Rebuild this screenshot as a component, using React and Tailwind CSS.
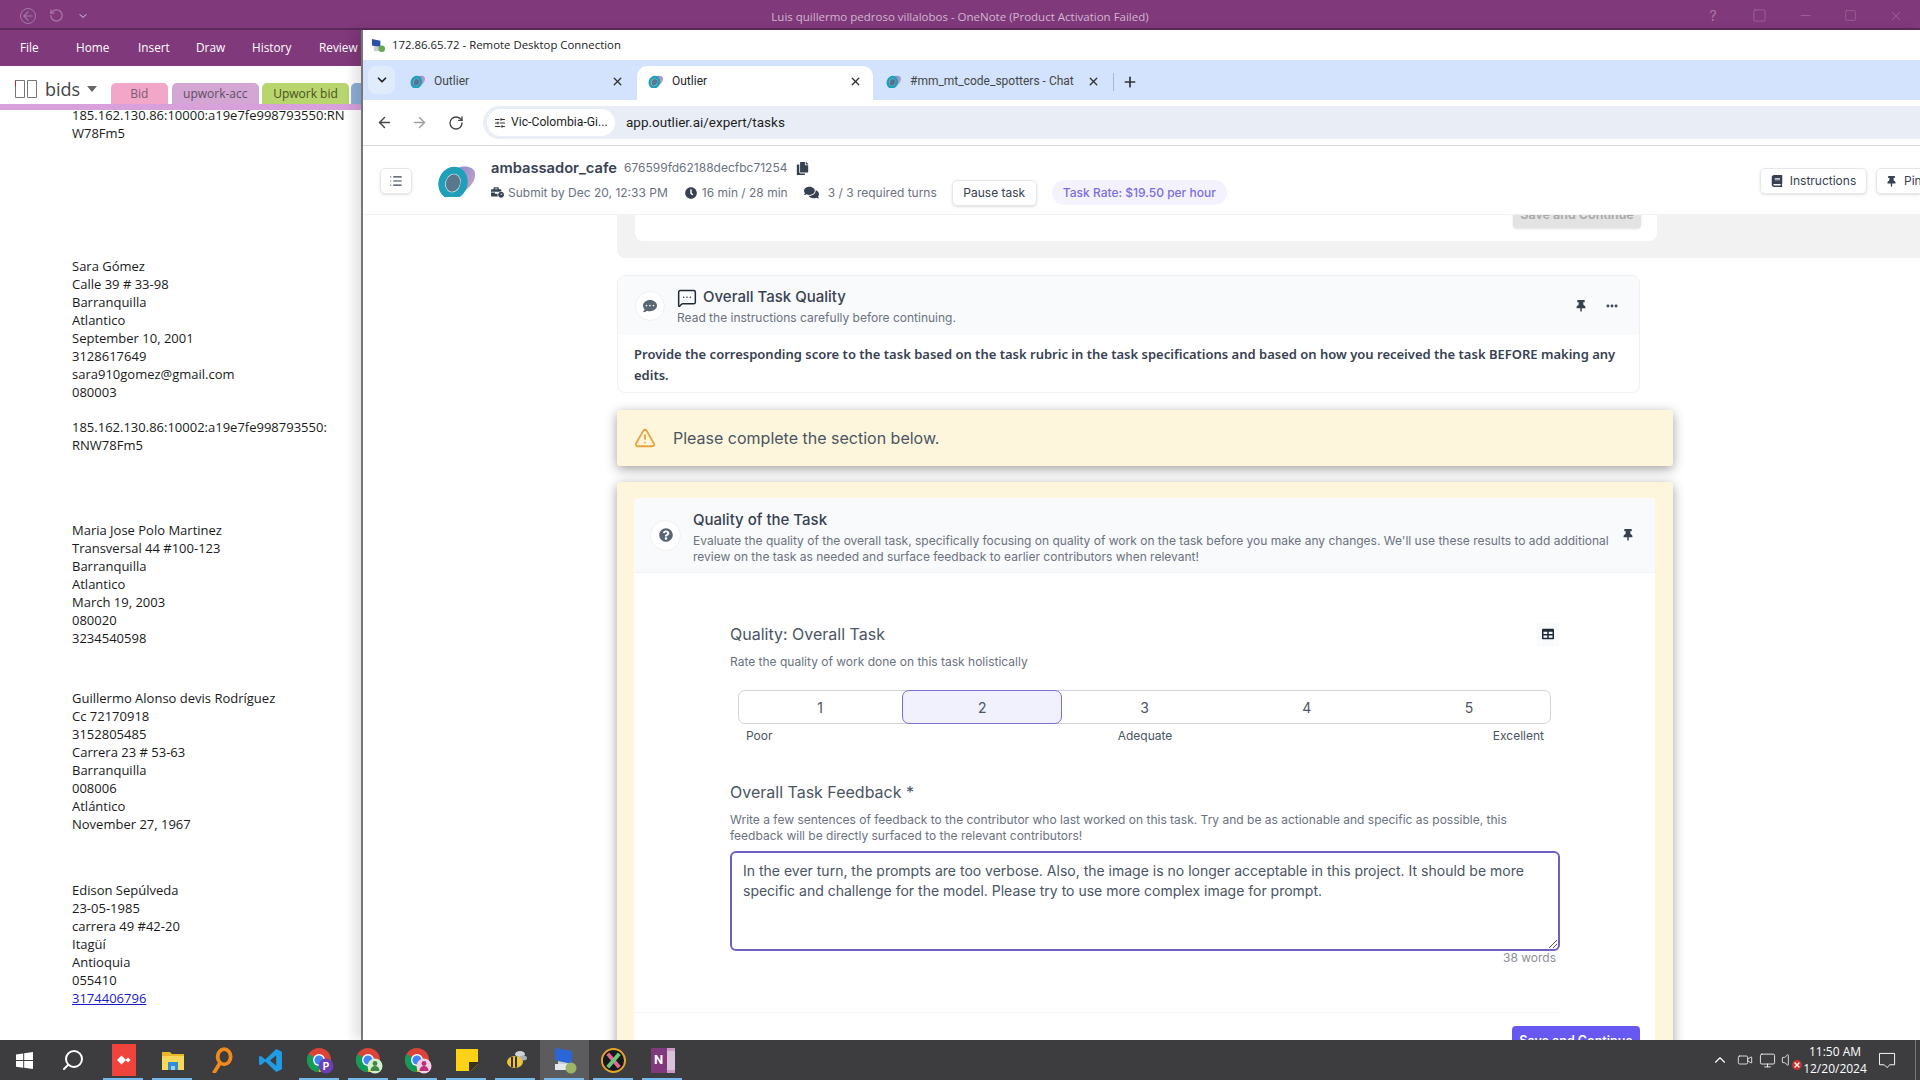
import React from 'react';
import { ArrowLeft, ArrowRight, ChevronDown, ChevronUp, Ellipsis, List, MessageSquareMore, Minus, Monitor, Plus, RotateCw, Search, SlidersHorizontal, Square, TriangleAlert, Video, Volume, X } from 'lucide-react';
import { FaBook, FaBusinessTime, FaClock, FaCommentDots, FaComments, FaCopy, FaQuestionCircle, FaTable, FaThumbtack } from 'react-icons/fa';

const notes = [
  { mt: 'mt-0', lines: ['185.162.130.86:10000:a19e7fe998793550:RN', 'W78Fm5'] },
  { mt: 'mt-[115px]', lines: ['Sara Gómez', 'Calle 39 # 33-98', 'Barranquilla', 'Atlantico', 'September 10, 2001', '3128617649', 'sara910gomez@gmail.com', '080003'] },
  { mt: 'mt-[17px]', lines: ['185.162.130.86:10002:a19e7fe998793550:', 'RNW78Fm5'] },
  { mt: 'mt-[67px]', lines: ['Maria Jose Polo Martinez', 'Transversal 44 #100-123', 'Barranquilla', 'Atlantico', 'March 19, 2003', '080020', '3234540598'] },
  { mt: 'mt-[42px]', lines: ['Guillermo Alonso devis Rodríguez', 'Cc 72170918', '3152805485', 'Carrera 23 # 53-63', 'Barranquilla', '008006', 'Atlántico', 'November 27, 1967'] },
  { mt: 'mt-[48px]', lines: ['Edison Sepúlveda', '23-05-1985', 'carrera 49 #42-20', 'Itagüí', 'Antioquia', '055410'] },
];

const OutlierLogo = ({ className }) => (
  <svg viewBox="0 0 38 32" className={className}>
    <defs>
      <linearGradient id="blob" x1="0" y1="0" x2="1" y2="1">
        <stop offset="0" stopColor="#7f8fd6" />
        <stop offset="1" stopColor="#d9a0c0" />
      </linearGradient>
    </defs>
    <path d="M20 3c7-3 17-2 18 5 1 8-6 16-13 19-3-3-2-8-1-12 1-5 0-9-4-12z" fill="url(#blob)" />
    <ellipse cx="16" cy="18" rx="11" ry="13" fill="none" stroke="#1f9fb8" strokeWidth="7" transform="rotate(18 16 18)" />
    <ellipse cx="16" cy="18" rx="7" ry="9" fill="#3d5f78" opacity="0.85" transform="rotate(18 16 18)" />
  </svg>
);

const ChromeIcon = ({ badge, glyph }) => (
  <svg viewBox="0 0 28 28" className="w-[28px] h-[28px]">
    <circle cx="13" cy="14" r="12" fill="#db4437" />
    <path d="M13 14 L2.6 8 A12 12 0 0 0 13 26z" fill="#0f9d58" />
    <path d="M13 14 L13 26 A12 12 0 0 0 25 14z" fill="#fbbc05" />
    <circle cx="13" cy="14" r="6" fill="#fff" />
    <circle cx="13" cy="14" r="4.6" fill="#4285f4" />
    <circle cx="20" cy="20" r="7.5" fill={badge} />
    {glyph === 'P' ? (
      <text x="20" y="24" textAnchor="middle" fontSize="10" fontWeight="700" fill="#fff" fontFamily="Roboto, sans-serif">P</text>
    ) : (
      <g fill={glyph}>
        <circle cx="20" cy="17.5" r="2.4" />
        <path d="M15.5 25c0-3.4 2-5 4.5-5s4.5 1.600 4.500 5z" />
      </g>
    )}
  </svg>
);

const taskbarIcons = [
  { key: 'win', run: false, node: (
    <svg viewBox="0 0 16 16" className="w-[17px] h-[17px] -translate-x-px" fill="#fff"><path d="M0 2.300 6.800 1.300v6.300H0zM7.700 1.200 16 0v7.600H7.700zM0 8.400h6.800v6.400L0 13.800zM7.700 8.400H16V16l-8.300-1.200z" /></svg>
  ) },
  { key: 'search', run: false, node: <Search size={24} color="#fff" strokeWidth={2} className="-scale-x-100 -translate-x-[2px]" /> },
  { key: 'desk', run: true, node: (
    <div className="w-[24px] h-[32px] bg-[#ef443b] flex items-center justify-center">
      <svg viewBox="0 0 16 16" className="w-[16px] h-[16px]" fill="#fff"><path d="M5.500 3.500 10 8l-4.500 4.500L1 8zM12 5.500 14.500 8 12 10.500 9.500 8z" /></svg>
    </div>
  ) },
  { key: 'files', run: true, node: (
    <svg viewBox="0 0 24 24" className="w-[24px] h-[24px]"><path d="M1 4h8l2 2h12v4H1z" fill="#e8b72c" /><path d="M1 8h22v14H1z" fill="#fbd75b" /><path d="M7 14h10v8H7z" fill="#2d8fd5" /><path d="M10 18h4v4h-4z" fill="#9ed0f0" /></svg>
  ) },
  { key: 'find', run: false, node: (
    <svg viewBox="0 0 24 24" className="w-[26px] h-[26px]" fill="none" stroke="#f08a1d" strokeWidth="3.500"><ellipse cx="14" cy="9" rx="6" ry="7" /><path d="M10 15 5 23" strokeLinecap="round" /></svg>
  ) },
  { key: 'code', run: false, node: (
    <svg viewBox="0 0 24 24" className="w-[25px] h-[25px]"><path d="M17.500 1 23 3.600v16.800L17.500 23 7 13l-4.500 3.500L1 15.500V8.500L2.500 7.500 7 11zM17.500 7 11.500 12l6 5z" fill="#1e9ce6" /></svg>
  ) },
  { key: 'c1', run: true, node: <ChromeIcon badge="#6a3fb5" glyph="P" /> },
  { key: 'c2', run: true, node: <ChromeIcon badge="#d6efcf" glyph="#3f8a4a" /> },
  { key: 'c3', run: true, node: <ChromeIcon badge="#f6cfe3" glyph="#b7317e" /> },
  { key: 'sticky', run: true, node: (
    <svg viewBox="0 0 24 24" className="w-[24px] h-[24px]"><path d="M1 1h22v15l-7 7H1z" fill="#fcd116" /><path d="M23 14v2l-7 7h-2v-9z" fill="#3a3320" /></svg>
  ) },
  { key: 'bee', run: true, node: (
    <svg viewBox="0 0 24 24" className="w-[24px] h-[24px]"><ellipse cx="16" cy="6" rx="5" ry="3" fill="#cfd4da" /><ellipse cx="19" cy="10" rx="4" ry="2.500" fill="#aab1b8" /><ellipse cx="11" cy="14" rx="8" ry="6" fill="#e9c53a" /><path d="M8 9v10M12 8.500v11" stroke="#3a2f10" strokeWidth="2" /></svg>
  ) },
  { key: 'rdp', run: true, active: true, node: (
    <svg viewBox="0 0 26 28" className="w-[26px] h-[28px]"><path d="M3 2 20 5v13L3 14z" fill="#2a66d8" /><path d="M6 15l14 3v3L6 18z" fill="#c9d3de" /><path d="M3 18h13v6H3z" fill="#e4e8ee" /><circle cx="19" cy="22" r="5.500" fill="#9db36a" /></svg>
  ) },
  { key: 'x', run: true, node: (
    <svg viewBox="0 0 26 26" className="w-[25px] h-[25px]"><circle cx="13" cy="13" r="12" fill="#15181c" stroke="#e6a42b" strokeWidth="2" /><path d="M7 6l12 14" stroke="#e06a8c" strokeWidth="4" /><path d="M19 6 7 20" stroke="#6fc37a" strokeWidth="4" /></svg>
  ) },
  { key: 'note', run: true, node: (
    <div className="w-[24px] h-[25px] flex">
      <div className="w-[16px] h-full bg-[#80397b] text-white text-[13px] font-bold flex items-center justify-center font-['Roboto',sans-serif]">N</div>
      <div className="w-[8px] h-full bg-[#d9c3d8] border-y-[3px] border-[#c79bc4]"></div>
    </div>
  ) },
];

const ChromeTab = ({ title, active, width }) => (
  <div className={`h-[34px] pb-[4px] flex items-center shrink-0 ${width} ${active ? 'bg-white rounded-t-[10px] text-[#1f1f1f]' : 'text-[#444746]'}`}>
    <OutlierLogo className="w-[15px] h-[13px] shrink-0" />
    <span className="ml-[9px] text-[12px] whitespace-nowrap overflow-hidden flex-1">{title}</span>
    <X size={13} strokeWidth={2.5} className="text-[#333] shrink-0" />
  </div>
);

const MetaItem = ({ icon, children, className }) => (
  <div className={`flex items-center text-[12px] text-[#6b7280] whitespace-nowrap ${className}`}>
    {icon}
    {children}
  </div>
);

export default function App() {
  return (
    <div className="w-[1920px] h-[1080px] overflow-hidden flex flex-col bg-white font-['Inter',sans-serif]">
      {/* onenote title */}
      <div className="h-[30px] shrink-0 bg-[#80397b] border-b-2 border-[#5a2a5a] pt-[3px] flex items-center relative text-[#a878a5]">
        <div className="w-[110px] flex items-center pl-[20px] gap-[13px]">
          <ArrowLeft size={16} className="border border-[#a878a5] rounded-full" />
          <RotateCw size={15} className="-scale-x-100" />
          <ChevronDown size={12} className="text-[#e6d3e4]" />
        </div>
        <div className="flex-1 pt-[2px] text-center text-[11.5px] text-[#d2b6d0] font-['Open_Sans',sans-serif] pl-[105px]">Luis quillermo pedroso villalobos - OneNote (Product Activation Failed)</div>
        <div className="flex items-center gap-[31px] pr-[16px]">
          <span className="text-[14px] w-[16px] text-center">?</span>
          <Square size={15} strokeWidth={1} />
          <Minus size={15} strokeWidth={1} />
          <Square size={13} strokeWidth={1} />
          <X size={16} strokeWidth={1} />
        </div>
      </div>

      <div className="flex-1 min-h-0 flex">
        {/* onenote body */}
        <div className="w-[361px] shrink-0 overflow-hidden font-['Open_Sans',sans-serif]">
          <div className="h-[36px] bg-[#80397b] text-white text-[11.8px] flex items-center whitespace-nowrap">
            <span className="ml-[20px] w-[56px]">File</span>
            <span className="w-[62px]">Home</span>
            <span className="w-[58px]">Insert</span>
            <span className="w-[56px]">Draw</span>
            <span className="w-[67px]">History</span>
            <span>Review</span>
          </div>
          <div className="h-[38px] flex items-end whitespace-nowrap">
            <div className="self-center mt-[8px] flex items-center w-[112px] pl-[15px] text-[#444]">
              <svg viewBox="0 0 22 18" className="w-[22px] h-[18px]" fill="none" stroke="#777"><path d="M.500.500h9v17h-9zM12.500.500h9v17h-9z" /><path d="M.500.500v6" stroke="#c22" /></svg>
              <span className="ml-[8px] text-[18px] leading-none">bids</span>
              <span className="ml-[7px] w-0 h-0 border-x-[5px] border-x-transparent border-t-[6px] border-t-[#666]"></span>
            </div>
            <div className="w-[57px] h-[21px] bg-[#f2a6c8] rounded-t-[5px] text-[#7a5a70] text-[12px] flex items-center justify-center">Bid</div>
            <div className="ml-[4px] w-[88px] h-[21px] bg-[#d3a6d4] rounded-t-[5px] text-[#5f4d63] text-[12px] flex items-center justify-center">upwork-acc</div>
            <div className="ml-[3px] w-[88px] h-[21px] bg-[#b9d56d] rounded-t-[5px] text-[#46521f] text-[12px] flex items-center justify-center">Upwork bid</div>
            <div className="ml-[2px] w-[10px] h-[21px] bg-[#8fb0d8] rounded-tl-[5px]"></div>
          </div>
          <div className="h-[6px] bg-[#d9a1dc]"></div>
          <div className="pl-[72px] -mt-[4px] text-[13px] leading-[18px] text-[#1a1a1a] whitespace-nowrap">
            {notes.map((n, i) => (
              <div key={i} className={n.mt}>
                {n.lines.map((l) => <div key={l}>{l}</div>)}
              </div>
            ))}
            <a className="text-[#1a1acc] underline block">3174406796</a>
          </div>
        </div>

        {/* remote desktop window */}
        <div className="flex-1 min-w-0 flex flex-col border-l-2 border-[#777] bg-white relative shadow-[-8px_0_10px_rgba(0,0,0,0.10)]">
          <div className="h-[30px] shrink-0 flex items-center pl-[8px] text-[11.4px] text-[#222] font-['Open_Sans',sans-serif]">
            <svg viewBox="0 0 16 16" className="w-[15px] h-[15px]"><path d="M1 1l9 2v7L1 8z" fill="#2a50a8" /><path d="M3 9h8v5H3z" fill="#c7ced8" /><circle cx="11.500" cy="11.500" r="3.500" fill="#6aa84f" /></svg>
            <span className="ml-[6px]">172.86.65.72 - Remote Desktop Connection</span>
          </div>

          {/* chrome tabs */}
          <div className="h-[40px] shrink-0 bg-[#d3e3fd] flex items-end font-['Roboto',sans-serif]">
            <div className="ml-[5px] mb-[6px] w-[27px] h-[28px] rounded-[8px] bg-[#e0ebfc] flex items-center justify-center">
              <ChevronDown size={14} strokeWidth={3} className="text-[#222]" />
            </div>
            <ChromeTab title="Outlier" width="ml-[4px] w-[238px] pl-[11px] pr-[13px]" />
            <ChromeTab title="Outlier" active width="w-[236px] px-[11px]" />
            <ChromeTab title="#mm_mt_code_spotters - Chat" width="w-[240px] pl-[13px] pr-[13px]" />
            <div className="mb-[8px] flex items-center h-[20px]">
              <span className="w-px h-[18px] bg-[#a9b6cc]"></span>
              <Plus size={16} strokeWidth={2.5} className="ml-[8px] text-[#333]" />
            </div>
          </div>

          {/* chrome toolbar */}
          <div className="h-[46px] shrink-0 flex items-center pl-[13px] border-b border-[#d8d8d8] font-['Roboto',sans-serif]">
            <ArrowLeft size={17} className="text-[#444]" />
            <ArrowRight size={17} className="ml-[18px] text-[#a0a0a0]" />
            <RotateCw size={16} className="ml-[20px] text-[#444]" />
            <div className="ml-[19px] flex-1 h-[33px] rounded-l-full bg-[#e9eef6] flex items-center pl-[4px]">
              <div className="w-[128px] h-[27px] rounded-full bg-white flex items-center pl-[7px] text-[12.2px] text-[#1f1f1f] whitespace-nowrap">
                <SlidersHorizontal size={12} className="text-[#333]" />
                <span className="ml-[5px]">Vic-Colombia-Gi...</span>
              </div>
              <span className="ml-[11px] text-[13.5px] text-[#1f1f1f]">app.outlier.ai/expert/tasks</span>
            </div>
          </div>

          {/* task header */}
          <div className="h-[68px] shrink-0 mt-px border-b border-[#f2f2f2] flex items-center pl-[17px] relative z-10 bg-white">
            <div className="w-[32px] h-[26px] rounded-[5px] border border-[#e5e7eb] shadow-sm flex items-center justify-center">
              <List size={14} className="text-[#374151]" />
            </div>
            <OutlierLogo className="ml-[25px] w-[38px] h-[32px]" />
            <div className="ml-[16px] mt-[2px]">
              <div className="flex items-center whitespace-nowrap">
                <span className="text-[14.7px] font-semibold text-[#374151]">ambassador_cafe</span>
                <span className="ml-[7px] text-[12px] text-[#6b7280]">676599fd62188decfbc71254</span>
                <FaCopy size={13} className="ml-[9px] text-[#374151]" />
              </div>
              <div className="flex items-center">
                <MetaItem icon={<FaBusinessTime size={13} className="text-[#374151] mr-[4px]" />}>Submit by Dec 20, 12:33 PM</MetaItem>
                <MetaItem className="ml-[17px]" icon={<FaClock size={12} className="text-[#374151] mr-[5px]" />}>16 min / 28 min</MetaItem>
                <MetaItem className="ml-[16px]" icon={<FaComments size={15} className="text-[#374151] mr-[9px]" />}>3 / 3 required turns</MetaItem>
                <button className="ml-[15px] w-[85px] h-[26px] rounded-[5px] border border-[#e5e7eb] shadow-sm text-[12px] text-[#374151]">Pause task</button>
                <div className="ml-[15px] w-[175px] h-[25px] rounded-full bg-[#f4f3fd] text-[12px] font-medium text-[#7b6ee0] flex items-center justify-center whitespace-nowrap">Task Rate: $19.50 per hour</div>
              </div>
            </div>
            <div className="flex-1"></div>
            <button className="mt-[1px] w-[107px] h-[26px] rounded-[5px] border border-[#e5e7eb] shadow-sm text-[12px] text-[#374151] flex items-center justify-center shrink-0">
              <FaBook size={12} className="mr-[7px]" />Instructions
            </button>
            <button className="mt-[1px] ml-[9px] w-[44px] h-[26px] rounded-l-[5px] border border-r-0 border-[#e5e7eb] shadow-sm text-[12px] text-[#374151] flex items-center pl-[9px] shrink-0 overflow-hidden whitespace-nowrap">
              <FaThumbtack size={11} className="mr-[7px] shrink-0" />Pin
            </button>
          </div>

          {/* scrolled task content */}
          <div className="flex-1 min-h-0 overflow-hidden">
            <div className="ml-[254px] h-[43px] bg-[#f2f2f2] rounded-bl-lg pl-[18px]">
              <div className="w-[1022px] h-[26px] bg-white rounded-b-lg flex justify-end pr-[16px]">
                <div className="w-[128px] h-[30px] -mt-[17px] pt-[4px] rounded-[4px] bg-[#e3e3e3] shadow-sm text-[12.5px] font-semibold text-[#a8a8a8] flex items-center justify-center whitespace-nowrap">Save and Continue</div>
              </div>
            </div>

            <div className="ml-[254px] mt-[17px] w-[1023px] h-[118px] rounded-lg border border-[#f0f0f0] overflow-hidden">
              <div className="h-[59px] bg-[#f9fafb] flex items-center pl-[17px] pr-[17px]">
                <div className="w-[30px] h-[30px] rounded-full bg-white border border-[#f0f0f0] flex items-center justify-center shrink-0">
                  <FaCommentDots size={14} className="text-[#5b6675]" />
                </div>
                <div className="ml-[12px] flex-1 pt-[2px]">
                  <div className="flex items-center">
                    <MessageSquareMore size={20} strokeWidth={1.8} className="text-[#1f2937]" />
                    <span className="ml-[6px] text-[15px] font-medium text-[#374151]">Overall Task Quality</span>
                  </div>
                  <div className="text-[12px] leading-[18px] text-[#6b7280]">Read the instructions carefully before continuing.</div>
                </div>
                <FaThumbtack size={12} className="text-[#374151]" />
                <Ellipsis size={14} strokeWidth={3} className="ml-[18px] mr-[3px] text-[#374151]" />
              </div>
              <div className="pl-[16px] pr-[16px] pt-[9px] text-[13px] leading-[21px] font-semibold text-[#374151] font-['Noto_Sans',sans-serif]">
                Provide the corresponding score to the task based on the task rubric in the task specifications and based on how you received the task BEFORE making any edits.
              </div>
            </div>

            <div className="ml-[254px] mt-[17px] w-[1056px] h-[56px] rounded-[3px] bg-[#fef6dc] shadow-[0_3px_12px_rgba(0,0,0,0.38)] flex items-center pl-[17px]">
              <TriangleAlert size={22} className="text-[#e8a33d]" />
              <span className="ml-[17px] text-[16px] text-[#4b5563]">Please complete the section below.</span>
            </div>

            <div className="ml-[254px] mt-[16px] w-[1056px] bg-[#fef6dc] shadow-[0_3px_12px_rgba(0,0,0,0.38)] pl-[17px] pr-[18px] pt-[16px] rounded-t-[3px]">
              <div className="bg-white rounded-t-lg h-[600px]">
                <div className="h-[75px] bg-[#f9fafb] border-b border-[#f3f4f6] flex items-center pl-[16px] pr-[21px]">
                  <div className="w-[31px] h-[31px] rounded-full bg-white border border-[#f0f0f0] flex items-center justify-center shrink-0">
                    <FaQuestionCircle size={14} className="text-[#5b6675]" />
                  </div>
                  <div className="ml-[12px] flex-1 pt-[4px]">
                    <div className="text-[15px] leading-[20px] font-medium text-[#374151]">Quality of the Task</div>
                    <div className="mt-[3px] text-[12px] leading-[16px] text-[#6b7280] w-[920px]">Evaluate the quality of the overall task, specifically focusing on quality of work on the task before you make any changes. We'll use these results to add additional review on the task as needed and surface feedback to earlier contributors when relevant!</div>
                  </div>
                  <FaThumbtack size={12} className="text-[#374151]" />
                </div>

                <div className="pl-[96px] w-[926px] h-[440px] pt-[49px] border-b border-[#f5f5f5]">
                  <div className="flex items-center justify-between h-[24px] pr-[1px]">
                    <span className="text-[16px] text-[#4b5563]">Quality: Overall Task</span>
                    <div className="w-[22px] h-[24px] bg-[#f9fafb] flex items-center justify-center">
                      <FaTable size={12} className="text-[#1f2937]" />
                    </div>
                  </div>
                  <div className="mt-[8px] text-[12px] leading-[16px] text-[#6b7280]">Rate the quality of work done on this task holistically</div>

                  <div className="mt-[20px] ml-[8px] w-[813px] h-[34px] rounded-[7px] border border-[#d1d5db] grid grid-cols-5 text-[14px] text-[#4b5563]">
                    <div className="flex items-center justify-center">1</div>
                    <div className="-my-px mx-px rounded-[7px] border border-[#7c6fd8] bg-[#f1f0fd] flex items-center justify-center">2</div>
                    <div className="flex items-center justify-center">3</div>
                    <div className="flex items-center justify-center">4</div>
                    <div className="flex items-center justify-center">5</div>
                  </div>
                  <div className="mt-[4px] ml-[16px] w-[798px] grid grid-cols-3 text-[12px] leading-[16px] text-[#4b5563]">
                    <span>Poor</span>
                    <span className="text-center">Adequate</span>
                    <span className="text-right">Excellent</span>
                  </div>

                  <div className="mt-[36px] text-[16px] leading-[24px] text-[#4b5563]">Overall Task Feedback *</div>
                  <div className="mt-[8px] w-[800px] text-[12px] leading-[16px] text-[#6b7280]">Write a few sentences of feedback to the contributor who last worked on this task. Try and be as actionable and specific as possible, this feedback will be directly surfaced to the relevant contributors!</div>
                  <div className="mt-[7px] w-[830px] h-[100px] rounded-[6px] border-2 border-[#6f5fc4] pl-[11px] pr-[20px] pt-[8px] text-[14px] leading-[20px] text-[#4b5563] relative">
                    In the ever turn, the prompts are too verbose. Also, the image is no longer acceptable in this project. It should be more specific and challenge for the model. Please try to use more complex image for prompt.
                    <svg viewBox="0 0 10 10" className="w-[10px] h-[10px] absolute right-0 bottom-0" stroke="#555" fill="none"><path d="M9 1 1 9M9 5 5 9" /></svg>
                  </div>
                  <div className="-mt-px w-[826px] text-right text-[12px] leading-[16px] text-[#8b8f96]">38 words</div>
                </div>

                <div className="flex justify-end pr-[15px] pt-[13px]">
                  <div className="w-[128px] h-[30px] rounded-[4px] bg-[#6658f0] text-[12.5px] font-semibold text-white flex items-center justify-center whitespace-nowrap">Save and Continue</div>
                </div>
              </div>
            </div>
          </div>
        </div>
      </div>

      {/* taskbar */}
      <div className="h-[40px] shrink-0 bg-[#3d3d40] flex items-stretch relative z-20 font-['Open_Sans',sans-serif]">
        <div className="w-[1px]"></div>
        {taskbarIcons.map((ic) => (
          <div key={ic.key} className={`w-[49px] shrink-0 flex items-center justify-center relative ${ic.active ? 'bg-[#5c5c5e]' : ''}`}>
            {ic.node}
            {ic.run && <span className="absolute bottom-0 left-[4px] right-[5px] h-[2px] bg-[#76b9ed]"></span>}
          </div>
        ))}
        <div className="flex-1"></div>
        <div className="flex items-center text-white">
          <ChevronUp size={18} strokeWidth={1.5} />
          <Video size={16} strokeWidth={1.2} className="ml-[8px]" />
          <Monitor size={17} strokeWidth={1.2} className="ml-[6px]" />
          <div className="ml-[5px] relative">
            <Volume size={16} strokeWidth={1.2} />
            <div className="absolute -right-[5px] -bottom-[2px] w-[10px] h-[10px] rounded-full bg-[#c9302c] flex items-center justify-center">
              <X size={8} strokeWidth={4} className="text-white" />
            </div>
          </div>
          <div className="ml-[3px] w-[70px] text-center text-[12px] leading-[17px]">
            <div>11:50 AM</div>
            <div>12/20/2024</div>
          </div>
          <svg viewBox="0 0 18 18" className="ml-[9px] w-[17px] h-[17px]" fill="none" stroke="#fff"><path d="M.500 1.500h16v12h-5l-3 3-3-3h-5z" /></svg>
          <div className="ml-[19px] w-px h-full bg-[#777] mr-[4px]"></div>
        </div>
      </div>
    </div>
  );
}
